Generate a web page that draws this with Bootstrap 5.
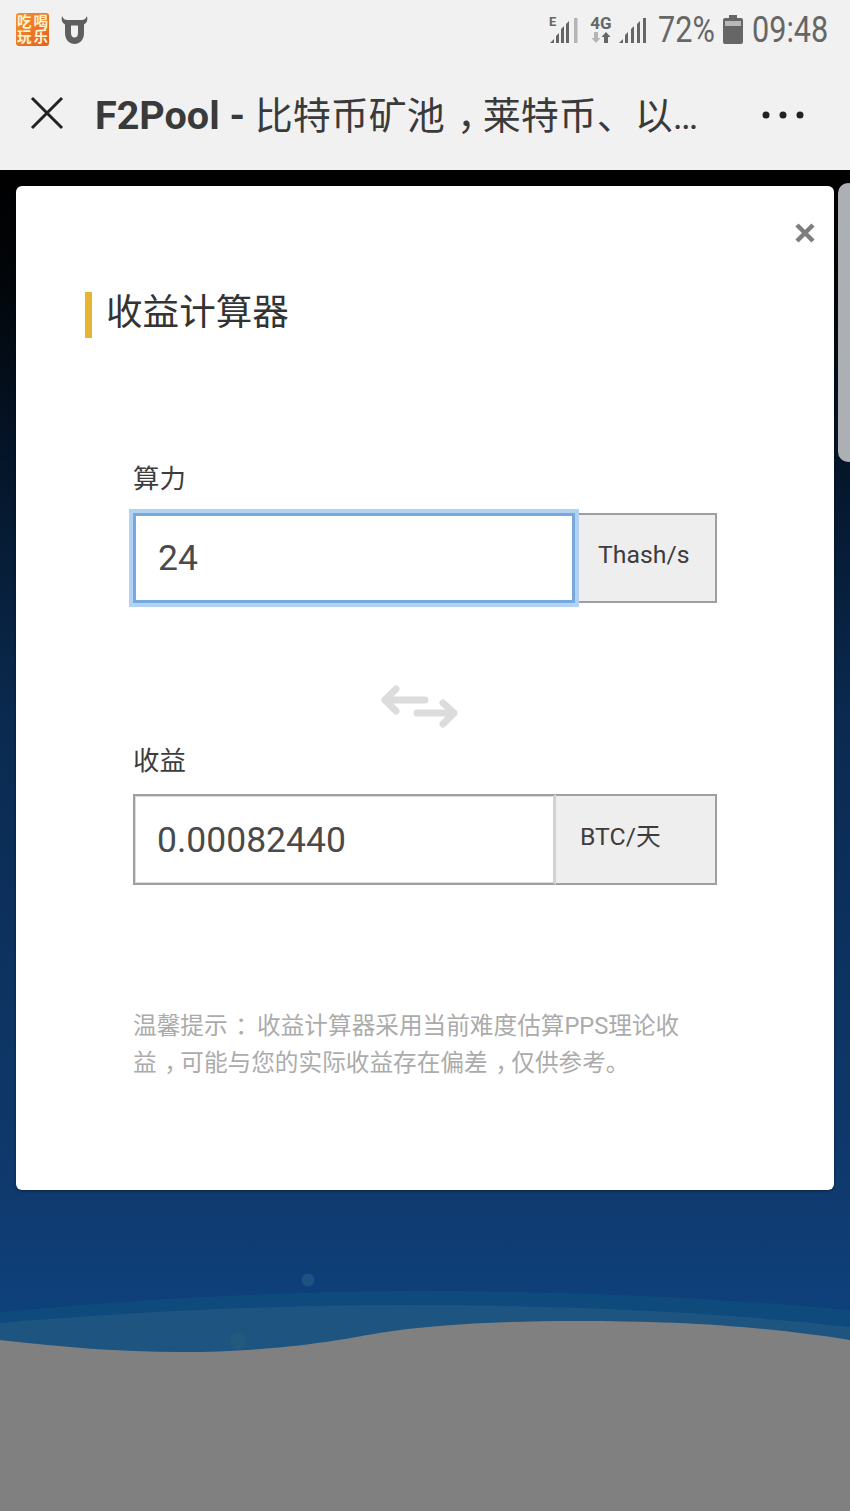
<!DOCTYPE html>
<html lang="zh-CN">
<head>
<meta charset="utf-8">
<title>F2Pool</title>
<link href="https://cdn.jsdelivr.net/npm/bootstrap@5.3.0/dist/css/bootstrap.min.css" rel="stylesheet">
<style>
html,body{height:1511px;overflow:hidden;}
body{font-family:Roboto,"Noto Sans CJK SC",sans-serif;background:#808080;color:#333;}
.phone-head{height:170px;background:#f1f1f1;}
.status-row{height:59px;padding:0 20px 0 16px;color:#666;}
.app-badge{width:33px;height:33px;background:linear-gradient(135deg,#f2922a,#e85f1e);border-radius:3px;color:#fff3d6;font-size:14.500px;line-height:15px;font-weight:700;display:grid;grid-template-columns:1fr 1fr;justify-items:center;align-content:center;}
.bull{margin-left:11px;}
.status-txt{font-size:36px;line-height:1;display:inline-block;transform:scaleX(.85);transform-origin:left center;}
.pct{width:56px;margin-left:11px;}
.clock{width:78px;margin-left:9px;}
.batt{margin-left:9px;}
.net-4g{margin-left:10px;}
.net-sig{margin-left:5px;}
.tool-row{height:111px;padding:0 46px 0 30px;}
.close-svg{margin-bottom:4px;}
.page-title{margin:3px 0 0 31px;font-size:38px;line-height:1;font-weight:400;color:#3a3a3a;white-space:nowrap;}
.page-title b{font-weight:700;font-size:39.500px;}
.punct-mid{margin-left:.32em;letter-spacing:-.32em;}
.stage{position:relative;height:1341px;overflow:hidden;background:linear-gradient(180deg,#000 0,#020508 100px,#05162b 300px,#0a2a50 550px,#0f3a6e 1020px,#0e407a 1130px);}
.wave{position:absolute;left:0;top:1120px;overflow:visible;}
.scroll-thumb{position:absolute;left:838px;top:13px;width:20px;height:279px;background:#acafb3;border-radius:10px;}
.calc-card{position:relative;margin:16px 16px 0;height:1004px;background:#fff;border-radius:6px;box-shadow:0 1px 3px rgba(0,0,0,.4);padding:106px 117px 0 69px;}
.close-x{position:absolute;right:19px;top:37px;}
.calc-title{border-left:7px solid #e5b531;height:46px;padding-left:14px;margin:0;font-size:36.600px;line-height:42px;font-weight:400;color:#333;}
.calc-body{padding-left:48px;}
.calc-label{display:block;font-size:26.400px;line-height:30px;color:#3d3d3d;margin:0 0 19px;}
.calc-first{margin-top:126px;}
.calc-second{margin-bottom:18px;}
.calc-group{height:90px;}
.calc-group-tall{height:91px;}
.calc-group .form-control{height:100%;border-radius:0;font-size:35.500px;color:#4a4a4a;padding:0 0 0 22px;font-family:Roboto,sans-serif;}
.calc-group .input-group-text{border:2px solid #9f9f9f;border-left-width:0;border-radius:0;background:#eee;font-size:24.800px;color:#3d3d3d;justify-content:flex-start;padding:0 0 6px 0;flex:1;}
.focus-input.form-control{width:442px;flex:0 0 442px;border:3px solid #77a9de;box-shadow:0 0 0 4px #b2d2f4;position:relative;z-index:3;}
.focus-input + .input-group-text{padding-left:24px;}
.calc-group .result-input.form-control{flex:0 0 423px;width:423px;border:2px solid #9f9f9f;border-right:3px solid #d2d2d2;box-shadow:inset 1px 1px 0 #ddd,inset 0 -1px 0 #ddd;padding-left:22px;}
.result-input + .input-group-text{padding-left:25px;}
.swap{margin:82px 0 17px 247px;display:block;}
.calc-note{margin:123px 0 0;font-size:23.650px;line-height:37px;color:#ababab;white-space:nowrap;}
</style>
</head>
<body>
<header class="phone-head">
  <div class="status-row d-flex align-items-center">
    <div class="app-badge"><span>吃</span><span>喝</span><span>玩</span><span>乐</span></div>
    <svg class="bull" width="29" height="30" viewBox="0 0 29 30"><path d="M2 1C1 5 2 8 5 9.500L5 18C5 25 9.500 29 14.500 29C19.500 29 24 25 24 18L24 9.500C27 8 28 5 27 1C25.500 4 24 5 22 5L7 5C5 5 3.500 4 2 1ZM11 10.500L18 10.500L18 18C18 21 16.500 22.500 14.500 22.500C12.500 22.500 11 21 11 18Z" fill="#5f5f5f"/></svg>
    <div class="ms-auto d-flex align-items-center">
      <svg width="30" height="30" viewBox="0 0 30 30"><text x="0" y="11" font-family="Roboto,sans-serif" font-size="13" font-weight="700" fill="#666">E</text><path d="M1 28L5 24V28ZM7 28V21L10 18V28ZM12 28V14L15 11V28ZM17 28V9L20 6V28Z" fill="#666"/><path d="M25 28V3H28.500V28Z" fill="#b5b5b5"/></svg>
      <svg class="net-4g" width="24" height="38" viewBox="0 -4 24 38"><text x="12" y="14" text-anchor="middle" font-family="Roboto,sans-serif" font-size="17" font-weight="700" fill="#666">4G</text><path d="M5 17H9V23H11.500L7 28L2.500 23H5Z" fill="#b5b5b5"/><path d="M15 28V22H12.500L17 17L21.500 22H19V28Z" fill="#666"/></svg>
      <svg class="net-sig" width="29" height="30" viewBox="0 0 29 30"><path d="M1 28L5 24V28ZM7 28V20L10 17V28ZM13 28V14L16 11V28ZM19 28V9L22 6V28ZM25 28V3H28V28Z" fill="#666"/></svg>
      <span class="status-txt pct">72%</span>
      <svg class="batt" width="20" height="30" viewBox="0 0 20 30"><path d="M6 0H14V3H18Q20 3 20 5V27Q20 29 18 29H2Q0 29 0 27V5Q0 3 2 3H6Z" fill="#666"/><rect x="2" y="6" width="16" height="5" fill="#b9b9b9"/></svg>
      <span class="status-txt clock">09:48</span>
    </div>
  </div>
  <div class="tool-row d-flex align-items-center">
    <svg class="close-svg" width="34" height="34" viewBox="0 0 34 34"><path d="M2 2L32 32M32 2L2 32" stroke="#222" stroke-width="3" fill="none"/></svg>
    <h1 class="page-title"><b>F2Pool - </b>比特币矿池<span class="punct-mid">，</span>莱特币、以…</h1>
    <svg class="ms-auto" width="42" height="10" viewBox="0 0 42 10"><circle cx="4" cy="5" r="3.500" fill="#222"/><circle cx="21" cy="5" r="3.500" fill="#222"/><circle cx="38" cy="5" r="3.500" fill="#222"/></svg>
  </div>
</header>
<main class="stage">
  <svg class="wave" width="850" height="221" viewBox="0 0 850 221">
    <circle cx="308" cy="-10" r="6.500" fill="#1b5282"/>
    <path d="M0 22C150 8 280 1 430 1C580 1 720 8 850 20V221H0Z" fill="#0e4a7c"/>
    <path d="M0 33C130 22 270 15 400 15C560 15 720 22 850 37V221H0Z" fill="#1d5480"/>
    <ellipse cx="238" cy="51" rx="8" ry="9" fill="#22597f"/>
    <path d="M0 50C60 57 120 62 179 62C270 62 330 52 379 43C430 35 500 31 575 31C680 31 760 36 850 50V221H0Z" fill="#808080"/>
  </svg>
  <div class="scroll-thumb"></div>
  <section class="calc-card">
    <svg class="close-x" width="20" height="20" viewBox="0 0 20 20"><path d="M2 2L18 18M18 2L2 18" stroke="#7d7d7d" stroke-width="4.500" fill="none"/></svg>
    <h2 class="calc-title">收益计算器</h2>
    <div class="calc-body">
      <label class="calc-label calc-first" for="hash">算力</label>
      <div class="input-group calc-group">
        <input id="hash" class="form-control focus-input" type="text" value="24">
        <span class="input-group-text">Thash/s</span>
      </div>
      <svg class="swap" width="80" height="44" viewBox="0 0 80 44"><path d="M16 4L5 15L16 26M5 15H45M63 18L74 28L63 39M74 28H37" stroke="#dcdcdc" stroke-width="7" stroke-linecap="round" stroke-linejoin="round" fill="none"/></svg>
      <label class="calc-label calc-second" for="gain">收益</label>
      <div class="input-group calc-group calc-group-tall">
        <input id="gain" class="form-control result-input" type="text" value="0.00082440">
        <span class="input-group-text">BTC/天</span>
      </div>
      <div class="calc-note">
        <div>温馨提示<span class="punct-mid">：</span> 收益计算器采用当前难度估算PPS理论收</div>
        <div>益<span class="punct-mid">，</span>可能与您的实际收益存在偏差<span class="punct-mid">，</span>仅供参考。</div>
      </div>
    </div>
  </section>
</main>
<script src="https://cdn.jsdelivr.net/npm/bootstrap@5.3.0/dist/js/bootstrap.bundle.min.js"></script>
</body>
</html>
